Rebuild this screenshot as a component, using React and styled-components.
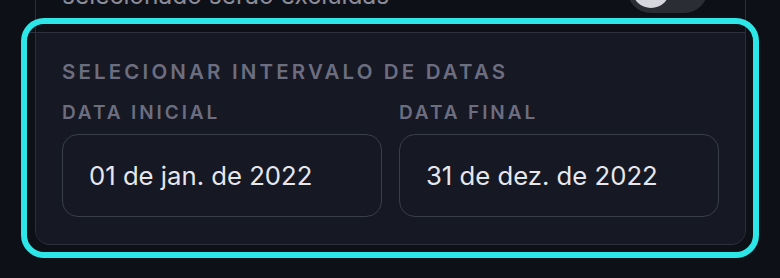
import React from "react";
import styled, { createGlobalStyle } from "styled-components";

const Global = createGlobalStyle`
  html, body { margin: 0; padding: 0; background: #0e1017; overflow: hidden; }
  body { font-family: Inter, "Noto Sans", sans-serif; }
  * { box-sizing: border-box; }
`;

const Page = styled.div`
  width: 780px;
  height: 278px;
  overflow: hidden;
  padding-left: 35px;
`;

const Panel = styled.div`
  width: 711px;
  border-left: 1px solid #2b2e3a;
  border-right: 1px solid #2b2e3a;
  border-radius: 0 0 15px 15px;
  display: flex;
  flex-direction: column;
  margin-top: -40px;
`;

const SettingRow = styled.div`
  display: flex;
  align-items: flex-end;
  justify-content: space-between;
  height: 72px;
  padding: 0 37px 23px 26px;
`;

const SettingText = styled.span`
  font-size: 24.5px;
  line-height: 28px;
  color: #8a8c99;
`;

const Toggle = styled.div`
  position: relative;
  width: 81px;
  height: 48px;
  border-radius: 24px;
  background: #2b2d35;
  margin-bottom: -4px;
`;

const Knob = styled.div`
  position: absolute;
  left: 5px;
  top: 5px;
  width: 38px;
  height: 38px;
  border-radius: 50%;
  background: #d6d7dc;
`;

const DateSection = styled.section`
  position: relative;
  background: #161824;
  border-top: 1px solid #2e313d;
  border-bottom: 1px solid #2e313d;
  border-radius: 0 0 14px 14px;
  padding: 27px 26px 27px 26px;
  display: flex;
  flex-direction: column;

  &::before {
    content: "";
    position: absolute;
    left: -9px;
    top: -1px;
    width: 9px;
    height: 1px;
    background: #2e313d;
  }

  &::after {
    content: "";
    position: absolute;
    top: -15px;
    left: -15px;
    right: -14px;
    bottom: -14px;
    border: 6px solid #2ce6e8;
    border-radius: 23px;
    pointer-events: none;
  }
`;

const Caption = styled.div`
  font-size: ${(p) => (p.$small ? "19px" : "20.5px")};
  line-height: 24px;
  font-weight: 600;
  letter-spacing: ${(p) => (p.$small ? "2.9px" : "3.15px")};
  text-transform: uppercase;
  color: #6c6e80;
`;

const Fields = styled.div`
  display: grid;
  grid-template-columns: 1fr 1fr;
  column-gap: 17px;
  margin-top: 17px;
`;

const Field = styled.div`
  display: flex;
  flex-direction: column;
  gap: 9px;
`;

const DateBox = styled.div`
  height: 83px;
  border: 1.5px solid #3a3d4a;
  border-radius: 16px;
  display: flex;
  align-items: center;
  padding-left: 26px;
  font-size: 25.7px;
  color: #e6e7ec;
`;

export default function App() {
  return (
    <>
      <Global />
      <Page>
        <Panel>
          <SettingRow>
            <SettingText>selecionado serão excluídas</SettingText>
            <Toggle>
              <Knob />
            </Toggle>
          </SettingRow>
          <DateSection>
            <Caption>Selecionar intervalo de datas</Caption>
            <Fields>
              <Field>
                <Caption $small>Data inicial</Caption>
                <DateBox>01 de jan. de 2022</DateBox>
              </Field>
              <Field>
                <Caption $small>Data final</Caption>
                <DateBox>31 de dez. de 2022</DateBox>
              </Field>
            </Fields>
          </DateSection>
        </Panel>
      </Page>
    </>
  );
}
